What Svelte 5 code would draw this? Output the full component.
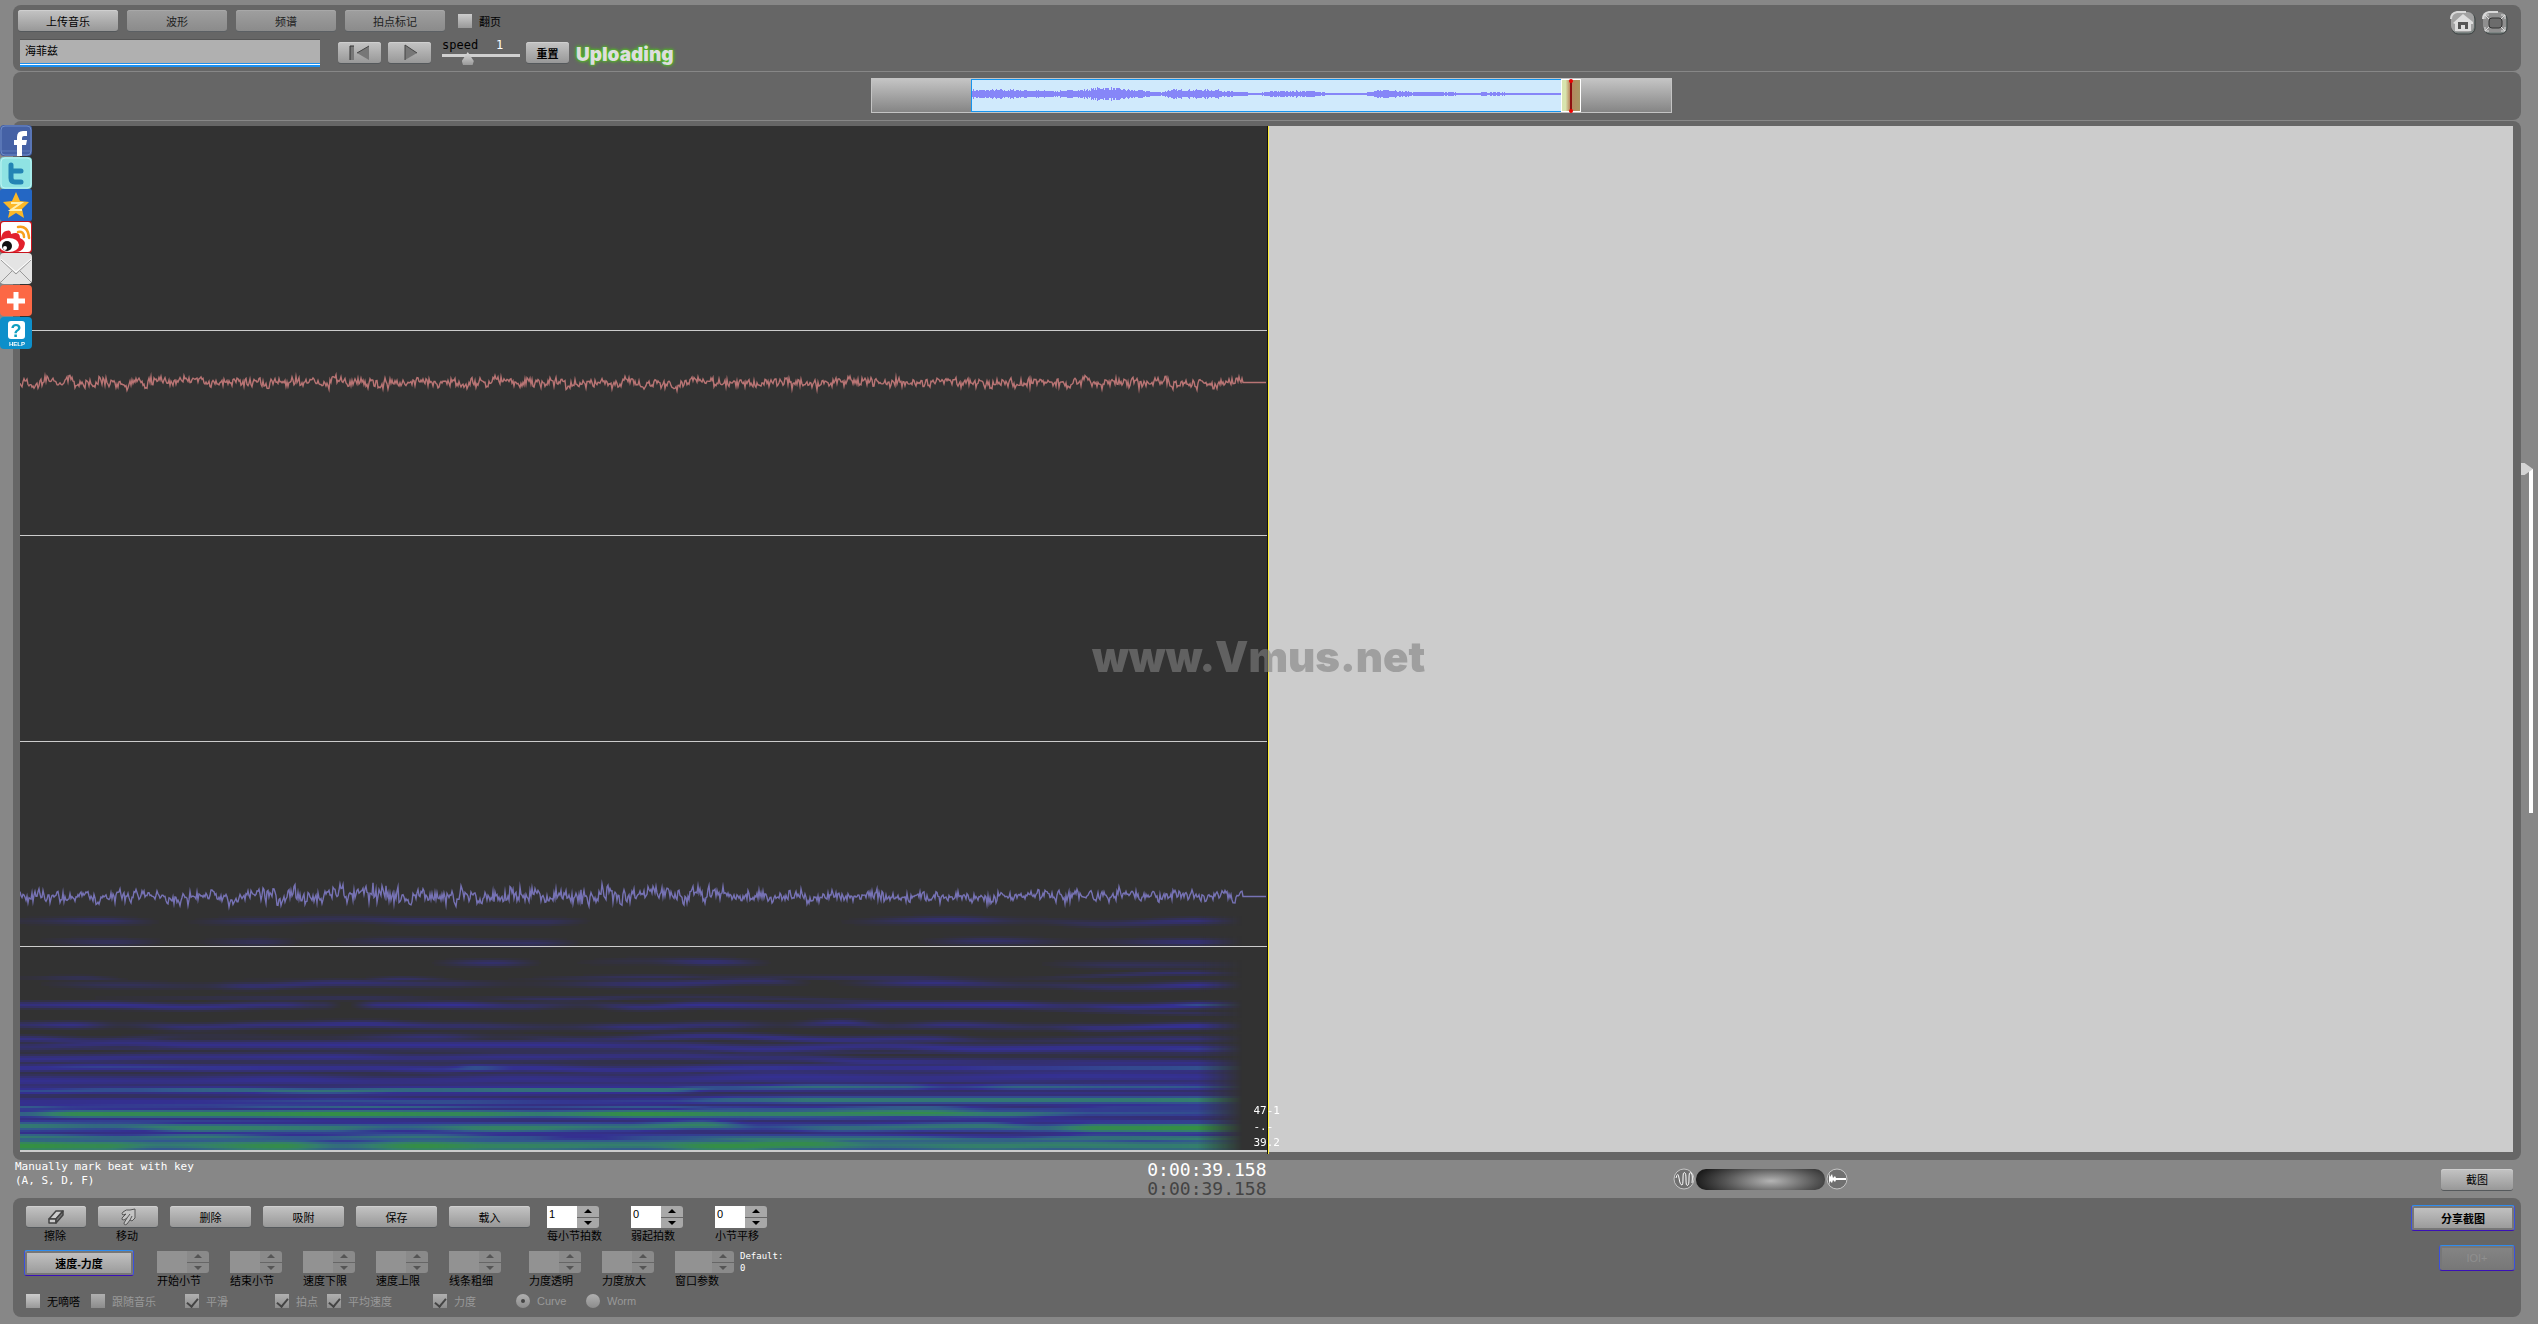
<script lang="ts">
	const navButtons = ['上传音乐', '波形', '频谱', '拍点标记'];
	const editButtons = ['删除', '吸附', '保存', '载入'];

	const beatFields = [
		{ label: '每小节拍数', value: '1' },
		{ label: '弱起拍数', value: '0' },
		{ label: '小节平移', value: '0' },
	];
	const curveFields = ['开始小节', '结束小节', '速度下限', '速度上限', '线条粗细'];
	const powerFields = ['力度透明', '力度放大', '窗口参数'];

	// w is the half width of a band, pts are [x, y, level] with y counted up from the bottom of the plot
	type Band = { w: number; pts: [number, number, number][] };
	const bands: Band[] = [
		{ w: 3, pts: [[0, 229, .08], [80, 229, .28], [150, 228, 0], [240, 229, .22], [320, 231, .18], [400, 229, .3], [520, 228, .22], [580, 229, 0], [800, 228, 0], [930, 230, .34], [1010, 229, .1], [1080, 226, .2], [1180, 229, .36], [1246, 229, .2]] },
		{ w: 3, pts: [[0, 209, 0], [90, 208, .22], [160, 208, 0], [240, 208, .2], [290, 208, 0], [380, 209, .2], [510, 207, .24], [570, 207, 0], [880, 208, 0], [970, 209, .28], [1060, 208, .05], [1180, 208, .36], [1246, 208, .2]] },
		{ w: 3, pts: [[0, 187, 0], [400, 187, 0], [470, 187, .3], [530, 187, 0], [620, 189, .1], [690, 188, .34], [760, 187, 0], [1000, 186, 0], [1100, 185, .2], [1180, 185, .15]] },
		{ w: 2, pts: [[0, 172, .05], [60, 172, .2], [120, 170, 0], [330, 170, .05], [380, 171, .26], [450, 170, 0], [640, 173, .22], [700, 173, .1], [880, 172, .25], [980, 171, .05], [1170, 177, .3], [1240, 176, .2]] },
		{ w: 3, pts: [[0, 166, 0], [100, 165, .2], [180, 164, .1], [230, 164, .32], [320, 167, .34], [420, 166, .22], [500, 166, .05], [640, 166, .34], [740, 169, .28], [800, 167, 0], [910, 167, .4], [1010, 165, .15], [1100, 163, .28], [1190, 165, .5], [1240, 165, .35]] },
		{ w: 3, pts: [[0, 145, .38], [80, 145, .48], [170, 143, .42], [260, 145, .38], [300, 145, .2], [325, 145, 0], [360, 145, .4], [430, 145, .5], [500, 144, .28], [560, 145, .12], [620, 143, .36], [680, 145, .48], [800, 144, .3], [880, 145, .46], [980, 145, .5], [1050, 144, .3], [1110, 143, .45], [1190, 145, .62], [1240, 145, .55]] },
		{ w: 2, pts: [[0, 152, 0], [340, 152, .2], [440, 152, .05], [540, 151, .24], [640, 153, .15], [1246, 136, .2]] },
		{ w: 3, pts: [[0, 125, .28], [50, 125, .42], [100, 125, .1], [170, 123, .34], [260, 125, .38], [340, 126, .46], [430, 124, .3], [540, 123, .14], [620, 123, .38], [700, 125, .32], [760, 125, .1], [820, 127, .4], [870, 124, .18], [930, 125, .38], [1020, 123, .2], [1080, 122, .4], [1180, 124, .54], [1246, 124, .4]] },
		{ w: 3, pts: [[0, 111, .4], [80, 109, .3], [180, 114, .1], [300, 112, .1], [410, 113, .34], [480, 113, .1], [560, 110, .26], [690, 114, .42], [820, 110, .42], [900, 111, .38], [980, 109, .15], [1160, 111, .34], [1246, 111, .3]] },
		{ w: 4, pts: [[0, 103, .3], [100, 107, .4], [180, 105, .46], [400, 105, .5], [520, 105, .48], [640, 104, .4], [740, 101, .46], [860, 104, .42], [960, 101, .5], [1080, 102, .5], [1246, 101, .56]] },
		{ w: 4, pts: [[0, 91, .45], [170, 93, .42], [310, 93, .48], [400, 92, .4], [500, 93, .44], [640, 94, .4], [760, 92, .34], [860, 88, .45], [1000, 88, .34], [1100, 87, .42], [1246, 86, .5]] },
		{ w: 4, pts: [[0, 82, .5], [80, 83, .56], [200, 82, .54], [340, 82, .48], [420, 81, .52], [455, 82, .64], [500, 82, .52], [600, 80, .48], [740, 82, .54], [860, 82, .48], [1000, 82, .56], [1120, 82, .62], [1246, 82, .68]] },
		{ w: 6, pts: [[0, 69, .48], [150, 69, .44], [260, 70, .5], [380, 68, .42], [500, 71, .46], [620, 70, .42], [760, 73, .5], [900, 72, .45], [1060, 74, .52], [1246, 73, .5]] },
		{ w: 4, pts: [[0, 59, .6], [100, 60, .64], [200, 60, .72], [300, 59, .76], [400, 60, .74], [520, 60, .78], [640, 60, .78], [700, 62, .64], [800, 63, .74], [880, 63, .7], [930, 63, .55], [1000, 63, .7], [1120, 63, .66], [1246, 63, .6]] },
		{ w: 5, pts: [[0, 48, .48], [160, 48, .52], [320, 49, .6], [420, 48, .62], [560, 48, .54], [640, 49, .56], [720, 50, .72], [800, 50, .8], [900, 50, .8], [1050, 50, .8], [1246, 50, .84]] },
		{ w: 3, pts: [[0, 43, .66], [60, 43, .54], [180, 43, .54], [260, 43, .64], [350, 43, .7], [500, 43, .56], [620, 43, .64], [740, 41, .62], [900, 42, .72], [1000, 41, .5], [1100, 42, .6], [1246, 42, .6]] },
		{ w: 5, pts: [[0, 36, .7], [60, 36, .94], [200, 36, .92], [320, 36, .98], [440, 36, .92], [520, 36, .82], [620, 36, .98], [740, 36, .86], [900, 37, .92], [980, 36, .8], [1080, 37, .62], [1246, 38, .6]] },
		{ w: 6, pts: [[0, 24, .8], [90, 24, .72], [180, 22, .86], [300, 22, .8], [380, 23, .7], [480, 22, .86], [600, 23, .76], [680, 25, .84], [740, 23, .6], [820, 22, .74], [960, 24, .78], [1020, 22, .72], [1080, 22, .94], [1180, 22, .98], [1246, 22, .85]] },
		{ w: 5, pts: [[0, 13, .78], [100, 12, .72], [180, 13, .78], [280, 12, .66], [400, 13, .76], [500, 12, .64], [560, 12, .5], [640, 12, .64], [740, 11, .78], [860, 11, .78], [980, 10, .7], [1080, 12, .76], [1246, 11, .82]] },
		{ w: 8, pts: [[0, 4, .98], [80, 4, .92], [140, 5, .78], [260, 4, .94], [320, 4, .74], [400, 4, .96], [480, 4, .86], [620, 5, .8], [700, 4, .96], [780, 6, .94], [860, 5, .76], [960, 4, .82], [1040, 5, .82], [1140, 4, .8], [1246, 4, .86]] },
	];

	const stops: [number, number[]][] = [
		[0, [50, 50, 50]],
		[.5, [53, 48, 146]],
		[.64, [50, 88, 142]],
		[.8, [52, 126, 110]],
		[1, [52, 148, 58]],
	];

	function colour(v: number) {
		for (let i = 1; i < stops.length; i++) {
			const [b, cb] = stops[i];
			if (v > b && i < stops.length - 1) continue;
			const [a, ca] = stops[i - 1];
			const t = Math.min(1, (v - a) / (b - a));
			return ca.map((c, k) => c + (cb[k] - c) * t);
		}
		return stops[0][1];
	}

	function random(seed: number) {
		let s = seed;
		return () => (s = (s * 16807) % 2147483647) / 2147483647;
	}

	function sample(pts: [number, number, number][], x: number) {
		let i = 1;
		while (i < pts.length - 1 && pts[i][0] < x) i++;
		const [x0, y0, v0] = pts[i - 1];
		const [x1, y1, v1] = pts[i];
		let t = Math.max(0, Math.min(1, (x - x0) / (x1 - x0)));
		t = t * t * (3 - 2 * t);
		return [y0 + (y1 - y0) * t, v0 + (v1 - v0) * t];
	}

	function floorLevel(r: number, x: number) {
		if (r < 24) return .42 + .14 * Math.sin(r * 2.3 + x / 170);
		if (r < 36) return .26 + .16 * Math.sin(r * 2.3 + x / 170);
		if (r < 55) return .1 + .1 * Math.sin(r * 1.9 + x / 210);
		return 0;
	}

	function drawSpectrum(ctx: CanvasRenderingContext2D, width: number, height: number) {
		const rows = 122;
		const end = width - 25;
		for (let x = 0; x < end; x++) {
			const levels = new Array(rows).fill(0);
			for (const band of bands) {
				const [y, v] = sample(band.pts, (x / width) * 1246);
				for (let r = 0; r < rows; r++) {
					const d = (r * 2 + 1 - y) / band.w;
					if (Math.abs(d) < 2) levels[r] = Math.max(levels[r], v * Math.exp(-d * d * .8));
				}
			}
			const fade = Math.min(1, (end - x) / 45);
			for (let r = 0; r < rows; r++) {
				const v = Math.max(levels[r], floorLevel(r, x));
				if (v < .02) continue;
				const [cr, cg, cb] = colour(v);
				ctx.fillStyle = `rgba(${cr | 0}, ${cg | 0}, ${cb | 0}, ${fade})`;
				ctx.fillRect(x, height - (r + 1) * 2, 1, 2);
			}
		}
	}

	function drawTrace(ctx: CanvasRenderingContext2D, y: number, width: number, stroke: string, seed: number, amp: (x: number) => number) {
		const rnd = random(seed);
		let drift = 0;
		ctx.strokeStyle = stroke;
		ctx.lineWidth = 1.4;
		ctx.beginPath();
		for (let x = 0; x < width; x++) {
			drift = drift * .72 + (rnd() - .5) * 4.4;
			const a = x > width - 25 ? 0 : amp(x);
			const spike = rnd() > .94 ? 1.7 : 1;
			ctx.lineTo(x, y + a * (drift * .55 + (rnd() - .5) * 3.4 * spike));
		}
		ctx.stroke();
	}

	let canvas: HTMLCanvasElement;
	let width = $state(0);
	let height = $state(0);

	$effect(() => {
		if (!width || !height) return;
		canvas.width = width;
		canvas.height = height;
		const ctx = canvas.getContext('2d')!;
		ctx.fillStyle = '#323232';
		ctx.fillRect(0, 0, width, height);
		drawSpectrum(ctx, width, height);
		ctx.fillStyle = '#ccc';
		for (let i = 1; i < 5; i++) ctx.fillRect(0, Math.floor(((height + 3) * i) / 5) - 1, width, 1);
		drawTrace(ctx, Math.round(height / 4) + .5, width, '#b87474', 41, () => 2);
		drawTrace(ctx, Math.round(height * .75) + 2.5, width, '#7672b4', 977, (x) => (x > 240 && x < 690 ? 3.4 : 2.3));
	});

	// half heights of the overview waveform
	const envelope: [number, number, number][] = [
		[0, 0, 4], [39, 0, 4], [82, 0, 3], [109, 0, 4], [132, 0, 6], [157, 0, 4], [189, 0, 2], [200, 0, 4], [243, 0, 4],
		[264, 0, 2], [285, 0, 1], [302, 0, 3], [334, 0, 3], [360, 0, 1], [388, 0, 1], [414, 0, 4], [441, 0, 2],
		[473, 0, 2], [494, 0, 1], [521, 0, 2], [543, 0, 1], [564, 0, 1], [589, 0, 1],
	];

	function overviewPath() {
		const rnd = random(7);
		let d = '';
		for (let x = 0; x < 589; x++) {
			const a = Math.max(1, Math.round(sample(envelope, x)[1] * (.7 + rnd() * .5)));
			d += `M${x} ${14 - a}h1v${a * 2}h-1z`;
		}
		return d;
	}
</script>

{#snippet spinner(id: string, label: string, value: string, disabled: boolean, wide = false)}
	<div class="field">
		<div class="spinner" class:wide class:off={disabled}>
			<input {id} type="text" {value} {disabled} />
			<div class="steps">
				<button type="button" {disabled} aria-label="{label} +"><svg viewBox="0 0 8 4"><path d="M0 4L4 0L8 4z" /></svg></button>
				<button type="button" {disabled} aria-label="{label} -"><svg viewBox="0 0 8 4"><path d="M0 0L4 4L8 0z" /></svg></button>
			</div>
		</div>
		<label for={id}>{label}</label>
	</div>
{/snippet}

{#snippet check(label: string, checked: boolean, disabled: boolean)}
	<label class="check" class:off={disabled}>
		<input type="checkbox" {checked} {disabled} />{label}
	</label>
{/snippet}

<div class="page">
	<header class="panel top">
		<div class="controls">
			<nav class="row">
				{#each navButtons as name, i}
					<button type="button" class="btn nav" class:dim={i > 0}>{name}</button>
				{/each}
				<div class="flip">{@render check('翻页', false, false)}</div>
			</nav>
			<div class="row player">
				<input class="title" type="text" value="海菲兹" aria-label="title" />
				<button type="button" class="btn play" aria-label="back to start">
					<svg width="22" height="18" viewBox="0 0 22 18">
						<path d="M1 2h4v14h-4z" fill="#777" /><path d="M1 16v-14h4" stroke="#333" fill="none" />
						<path d="M20 2v14L8 9z" fill="#777" /><path d="M8 9L20 2" stroke="#444" fill="none" />
					</svg>
				</button>
				<button type="button" class="btn play" aria-label="play">
					<svg width="16" height="18" viewBox="0 0 16 18">
						<path d="M3 1L15 9L3 16z" fill="#777" /><path d="M3 16v-15L15 9" stroke="#444" fill="none" />
					</svg>
				</button>
				<div class="speed">
					<label for="speed">speed</label><output for="speed">1</output>
					<input id="speed" type="range" min="0" max="3" step="0.1" value="0.9" />
				</div>
				<button type="button" class="btn reset">重置</button>
				<strong class="status">Uploading</strong>
			</div>
		</div>
		<div class="tools">
			<a href="#home" aria-label="home">
				<svg width="26" height="24" viewBox="0 0 26 24">
					<rect x="2" y="2" width="23" height="21" rx="6" fill="#7d8583" stroke="#3c4242" />
					<rect x="1" y="1" width="23" height="20" rx="6" fill="#a2a2a2" />
					<path d="M1 8q0-6 6-7h9" stroke="#d8d8d8" stroke-width="2" fill="none" />
					<path d="M3 12L13 3L23 11V13H21V20H5V13z" fill="#ddd" />
					<path d="M8 18v-7h10v7h-3v-4h-4v4z" fill="#555" />
				</svg>
			</a>
			<a href="#full" aria-label="full screen">
				<svg width="26" height="24" viewBox="0 0 26 24">
					<rect x="2" y="2" width="23" height="21" rx="6" fill="#7d8583" stroke="#3c4242" />
					<rect x="1" y="1" width="23" height="20" rx="6" fill="#8f8f8f" />
					<path d="M1 8q0-6 6-7h9" stroke="#d8d8d8" stroke-width="2" fill="none" />
					<rect x="7" y="7" width="13" height="10" rx="3" fill="#6c6c6c" stroke="#333" />
					<path d="M3 8V4H7M19 4H23V8M3 16V20H7M19 20H23V16M3 4l4 4M23 4l-4 4M3 20l4-4M23 20l-4-4" stroke="#ddd" fill="none" />
				</svg>
			</a>
		</div>
	</header>

	<section class="panel overview">
		<div class="track">
			<div class="selection">
				<svg viewBox="0 0 589 30" preserveAspectRatio="none"><path d={overviewPath()} fill="#8686f8" /></svg>
			</div>
			<div class="handle">
				<svg width="20" height="34" viewBox="0 0 20 34"><path d="M10 2V32" stroke="#8c1010" stroke-width="2" /><circle cx="10" cy="2" r="2" fill="#e00" /><circle cx="10" cy="32" r="2" fill="#e00" /></svg>
			</div>
		</div>
	</section>

	<main class="stage">
		<div class="panel plot-panel">
			<div class="plot">
				<div class="played" bind:clientWidth={width} bind:clientHeight={height}>
					<canvas bind:this={canvas}></canvas>
				</div>
				<div class="cursor"></div>
				<div class="watermark">www.Vmus.net</div>
				<div class="marks"><span>47-1</span><span>-.-</span><span>39.2</span></div>
			</div>
		</div>
		<input class="zoom" type="range" min="0" max="100" value="0" aria-label="zoom" />
	</main>

	<section class="strip">
		<div class="left">
			<p class="hint">Manually mark beat with key<br />(A, S, D, F)</p>
			<div class="times"><time>0:00:39.158</time><time>0:00:39.158</time></div>
		</div>
		<div class="right">
			<div class="jog">
				<svg width="22" height="22" viewBox="0 0 22 22"><circle cx="11" cy="11" r="10" fill="#707070" stroke="#c4c4c4" /><path d="M3 10Q5 3 6 10T9 17Q10 17 10 10T12 5Q13 5 13 12T15 17Q16 17 16 10T18 5Q20 6 19 15" stroke="#fff" fill="none" /></svg>
				<span class="wheel"></span>
				<svg width="22" height="22" viewBox="0 0 22 22"><circle cx="11" cy="11" r="10" fill="#707070" stroke="#c4c4c4" /><path d="M3 5L4 9L6 6L7 10L9 8L10 10L20 10V12L10 12L9 14L7 12L6 15L4 13L3 17z" fill="#fff" /></svg>
			</div>
			<button type="button" class="btn shot">截图</button>
		</div>
	</section>

	<footer class="panel bottom">
		<div class="settings">
			<div class="line">
				<div class="edit">
					<div class="tool">
						<button type="button" class="btn" aria-label="擦除">
							<svg width="18" height="16" viewBox="0 0 18 16" fill="#ccc" stroke="#444" stroke-width="1.5" stroke-linejoin="round"><path d="M2 10L9 2H16L9 10z" /><path d="M2 10H9V14H2z" /><path d="M9 10L16 2V6L9 14z" fill="#777" /></svg>
						</button>
						<span>擦除</span>
					</div>
					<div class="tool">
						<button type="button" class="btn" aria-label="移动">
							<svg width="18" height="18" viewBox="0 0 18 18" fill="#c4c4c4" stroke="#555" stroke-linejoin="round"><path d="M4 4Q7 1 11 2L16 1V10L13 13L11 12L8 16Q5 18 5 15L8 10L5 12Q2 12 3 10L7 6L4 7Q2 6 4 4z" /><path d="M8 10L11 6M11 12L13 8" fill="none" /></svg>
						</button>
						<span>移动</span>
					</div>
					{#each editButtons as name}
						<button type="button" class="btn wide">{name}</button>
					{/each}
				</div>
				<div class="beats">
					{#each beatFields as f, i}
						{@render spinner('beat' + i, f.label, f.value, false)}
					{/each}
				</div>
			</div>
			<div class="line second">
				<button type="button" class="btn framed curve-btn">速度-力度</button>
				<div class="fields">
					{#each curveFields as label, i}
						{@render spinner('curve' + i, label, '', true)}
					{/each}
				</div>
				<div class="fields">
					{#each powerFields as label, i}
						{@render spinner('power' + i, label, '', true, i === 2)}
					{/each}
				</div>
				<p class="default">Default:<br />0</p>
			</div>
			<div class="options">
				{@render check('无嘀嗒', false, false)}
				{@render check('跟随音乐', false, true)}
				{@render check('平滑', true, true)}
				{@render check('拍点', true, true)}
				{@render check('平均速度', true, true)}
				{@render check('力度', true, true)}
				<label class="check off"><input type="radio" name="mode" checked disabled />Curve</label>
				<label class="check off"><input type="radio" name="mode" disabled />Worm</label>
			</div>
		</div>
		<div class="share">
			<button type="button" class="btn framed share-btn">分享截图</button>
			<button type="button" class="btn framed ioi" disabled>IOI+</button>
		</div>
	</footer>

	<aside class="social">
		<a href="#facebook" aria-label="Facebook">
			<svg viewBox="0 0 32 32"><rect width="32" height="31" rx="4" fill="#4561a5" /><path d="M1 26h30" stroke="#5f7ab8" /><rect x="1" y="1" width="30" height="29" rx="4" fill="none" stroke="#6f8bc6" /><path d="M17 31V20h-3v-5h3v-3q0-6 6-6h4v5h-3q-2 0-2 2v2h5l-1 5h-4v11z" fill="#fff" /></svg>
		</a>
		<a href="#twitter" aria-label="Twitter">
			<svg viewBox="0 0 32 32"><rect width="32" height="32" rx="4" fill="#8fe3e3" /><rect x="1" y="1" width="30" height="30" rx="4" fill="none" stroke="#bdf4f2" /><path d="M11 8v13q0 4 4 4h6M11 14h10" stroke="#2484b4" stroke-width="5" stroke-linecap="round" fill="none" /></svg>
		</a>
		<a href="#qzone" aria-label="Qzone">
			<svg viewBox="0 0 32 32"><rect width="32" height="32" rx="2" fill="#2467c4" /><path d="M16 3l4 9 9 1-7 7 2 9-8-5-8 5 2-9-7-7 9-1z" fill="#fcb827" /><path d="M11 14h10l-10 7h11" stroke="#fff0b0" stroke-width="2" fill="none" /></svg>
		</a>
		<a href="#weibo" aria-label="Weibo">
			<svg viewBox="0 0 32 32"><rect width="32" height="32" rx="3" fill="#c8131c" /><rect x="1" y="1" width="30" height="30" rx="3" fill="#fff" /><path d="M1 17Q2 11 6 10Q11 8 11 13Q20 10 20 17Q27 20 24 26Q22 31 15 31H1z" fill="#e2202c" /><ellipse cx="9" cy="24" rx="10" ry="7" fill="#fff" /><circle cx="7" cy="25" r="5" fill="#111" /><circle cx="5" cy="27" r="2" fill="#fff" /><path d="M18 6q10-2 11 11M18 11q6-1 6 5" stroke="#f7a01d" stroke-width="2.5" fill="none" stroke-linecap="round" /></svg>
		</a>
		<a href="#mail" aria-label="Mail">
			<svg viewBox="0 0 32 32"><rect width="32" height="31" rx="4" fill="#e4e4e4" /><path d="M1 7L16 21L31 7M1 29L12 18M31 29L20 18" stroke="#999" fill="none" /><path d="M1 6L16 19L31 6" stroke="#fff" fill="none" /></svg>
		</a>
		<a href="#more" aria-label="More">
			<svg viewBox="0 0 32 32"><rect width="32" height="31" rx="4" fill="#fc6845" /><path d="M16 7v18M7 16h18" stroke="#fff" stroke-width="5" /></svg>
		</a>
		<a href="#help" aria-label="Help">
			<svg viewBox="0 0 32 32"><rect width="32" height="32" rx="4" fill="#0d8fca" /><rect x="8" y="4" width="17" height="18" rx="3" fill="#fff" /><text x="16" y="20" text-anchor="middle" font-size="18" font-weight="700" fill="#0f9fc0">?</text><text x="17" y="29" text-anchor="middle" font-size="6" font-weight="700" fill="#fff">HELP</text></svg>
		</a>
	</aside>
</div>

<style>
	:global(body) {
		margin: 0;
		background: #878787;
	}

	.page {
		position: relative;
		display: flex;
		flex-direction: column;
		box-sizing: border-box;
		min-height: 100vh;
		padding: 5px 0 7px 13px;
		font-family: "Liberation Sans", "Noto Sans CJK SC", sans-serif;
		font-size: 11px;
		color: #000;
	}

	.page * {
		box-sizing: border-box;
	}

	svg {
		display: block;
	}

	input,
	button {
		margin: 0;
		font: inherit;
		color: inherit;
	}

	.panel {
		margin-right: 17px;
		border-radius: 8px;
		background: #666;
	}

	.btn {
		display: flex;
		align-items: center;
		justify-content: center;
		height: 21px;
		padding: 0;
		border: 0;
		border-radius: 3px;
		background: linear-gradient(#c4c4c4, #989898);
		box-shadow: inset 0 1px #cfcfcf, 0 1px #55595c;
	}

	.btn.dim {
		background: linear-gradient(#9f9f9f, #8b8b8b);
		box-shadow: inset 0 1px #a8a8a8, 0 1px #5c6064;
		color: #222;
	}

	/* top bar */

	.top {
		display: flex;
		justify-content: space-between;
		height: 66px;
		padding: 5px;
	}

	.row {
		display: flex;
		align-items: center;
		gap: 9px;
		height: 21px;
	}

	.nav {
		width: 100px;
	}

	.flip {
		margin-left: 4px;
	}

	.player {
		gap: 7px;
		height: 27px;
		margin-top: 8px;
		padding-left: 2px;
	}

	.title {
		width: 300px;
		height: 28px;
		margin-right: 11px;
		padding: 0 5px 6px;
		border: 0;
		background: linear-gradient(#555 0 1px, #b0b0b0 1px 24px, #1c90f0 24px 25px, #fff 25px 26px, #1c90f0 26px);
	}

	.play {
		width: 43px;
	}

	.speed {
		display: grid;
		grid-template-columns: 1fr 24px;
		width: 78px;
		height: 27px;
		margin: 0 -1px 0 4px;
		font-family: "DejaVu Sans Mono", monospace;
		font-size: 12px;
		line-height: 12px;
	}

	.speed output {
		color: #fff;
	}

	.speed input {
		grid-column: span 2;
		width: 78px;
		height: 14px;
		appearance: none;
		background: linear-gradient(transparent 2px, #d0d0d0 2px 5px, transparent 5px);
	}

	.speed input::-webkit-slider-thumb {
		width: 12px;
		height: 13px;
		appearance: none;
		background: linear-gradient(#ddd, #999);
		clip-path: polygon(50% 0, 100% 70%, 90% 100%, 10% 100%, 0 70%);
	}

	.reset {
		width: 43px;
		font-weight: 700;
	}

	.status {
		padding-top: 3px;
		color: #ddd;
		font-family: Inter, sans-serif;
		font-size: 19px;
		font-weight: 900;
		text-shadow: 0 0 2px #4fc01e, 0 0 3px #4fc01e, 0 0 4px #4fc01e;
	}

	.tools {
		display: flex;
		gap: 6px;
		padding: 1px 8px;
	}

	/* overview */

	.overview {
		display: flex;
		justify-content: center;
		height: 48px;
		margin-top: 1px;
		padding: 6px 0 0 8px;
	}

	.track {
		display: flex;
		width: 801px;
		height: 35px;
		padding-left: 99px;
		border: 1px solid #c4c4c4;
		background: linear-gradient(#c4c4c4, #858585);
	}

	.selection {
		width: 590px;
		height: 33px;
		border: 1px solid #1594ee;
		border-right: 0;
		background: #d0eafc;
	}

	.selection svg {
		width: 100%;
		height: 30px;
	}

	.handle {
		width: 20px;
		height: 33px;
		border: 1px solid #fff;
		background: linear-gradient(90deg, #d8e4ae 20%, #b8845c 45%, #a89864);
	}

	.handle svg {
		margin: -1px;
	}

	/* plot */

	.stage {
		display: flex;
		flex: 1;
		margin-top: 1px;
	}

	.plot-panel {
		display: flex;
		flex: 1;
		margin-right: 0;
		padding: 5px 8px 8px 7px;
	}

	.plot {
		position: relative;
		flex: 1;
		padding-bottom: 2px;
		background: #ccc;
	}

	.played {
		width: 50%;
		height: 100%;
		min-height: 600px;
		overflow: hidden;
	}

	canvas {
		display: block;
	}

	/* playback position, drawn over both halves */
	.cursor {
		position: absolute;
		top: 0;
		bottom: -2px;
		left: 50%;
		width: 2px;
		background: linear-gradient(90deg, #111 1px, #ffee38 1px);
	}

	.watermark {
		position: absolute;
		top: calc(50% - 2px);
		left: 43%;
		color: rgba(128, 128, 128, .6);
		font-family: Inter, sans-serif;
		font-size: 42px;
		font-weight: 900;
		line-height: 40px;
	}

	.marks {
		position: absolute;
		bottom: 1px;
		left: calc(50% - 13px);
		display: grid;
		color: #fff;
		font-family: "DejaVu Sans Mono", monospace;
		font-size: 11px;
		line-height: 16px;
	}

	.zoom {
		width: 12px;
		height: 350px;
		margin: 342px 5px 0 0;
		appearance: none;
		writing-mode: vertical-lr;
		background: linear-gradient(90deg, transparent 8px, #fff 8px) 0 6px no-repeat;
	}

	.zoom::-webkit-slider-thumb {
		width: 12px;
		height: 12px;
		appearance: none;
		background: #d4d4d4;
		clip-path: polygon(0 0, 30% 0, 100% 50%, 30% 100%, 0 100%);
	}

	/* strip between plot and settings */

	.strip {
		display: grid;
		grid-template-columns: 1fr 1fr;
		height: 38px;
		margin: 0 25px 0 7px;
		font-family: "DejaVu Sans Mono", monospace;
		font-size: 11px;
	}

	.left {
		display: flex;
		justify-content: space-between;
	}

	.right {
		display: flex;
		align-items: center;
		justify-content: space-between;
		padding-left: 406px;
	}

	.hint {
		margin: 0 0 0 -5px;
		color: #fff;
		line-height: 14px;
	}

	.times {
		display: grid;
		color: #fff;
		font-size: 18px;
		line-height: 19px;
	}

	.times time + time {
		color: #444;
	}

	.jog {
		display: flex;
		align-items: center;
		gap: 1px;
	}

	.wheel {
		width: 129px;
		height: 21px;
		border-radius: 10px;
		background: radial-gradient(ellipse 76px 22px at 75px 12px, #b4b4b4, #555 60%, #1c1c1c);
	}

	.shot {
		width: 72px;
		font-family: "Liberation Sans", "Noto Sans CJK SC", sans-serif;
	}

	/* settings */

	.bottom {
		display: flex;
		justify-content: space-between;
		min-height: 119px;
		padding: 7px 6px 0 11px;
	}

	.line {
		display: flex;
		height: 45px;
		padding: 1px 0 0 2px;
	}

	.edit {
		display: flex;
		align-items: flex-start;
		gap: 12px;
		width: 521px;
	}

	.tool {
		text-align: center;
		line-height: 18px;
	}

	.tool .btn {
		width: 60px;
	}

	.tool span {
		padding-right: 2px;
	}

	.wide.btn {
		width: 81px;
	}

	.beats,
	.fields {
		display: flex;
	}

	.beats .field {
		width: 84px;
	}

	.fields .field {
		width: 73px;
	}

	.fields + .fields {
		margin-left: 7px;
	}

	.fields + .fields .field:last-child {
		width: 65px;
	}

	.field {
		line-height: 17px;
		white-space: nowrap;
	}

	.spinner {
		display: flex;
		width: 52px;
		height: 22px;
	}

	.spinner.wide {
		width: 59px;
	}

	.spinner input {
		flex: 1;
		min-width: 0;
		padding: 0 2px 6px;
		border: 0;
		background: #fff;
	}

	.steps {
		display: grid;
		grid-template-rows: 1fr 1fr;
		gap: 1px;
		width: 22px;
	}

	.steps button {
		display: grid;
		place-items: center;
		padding: 0;
		border: 0;
		border-radius: 0 3px 0 0;
		background: #a8a8a8;
	}

	.steps button + button {
		border-radius: 0 0 3px 0;
	}

	.steps svg {
		width: 8px;
		height: 4px;
	}

	.off.spinner input {
		background: #929292;
	}

	.off .steps button {
		background: #8a8a8a;
		fill: #555;
	}

	.second {
		height: 43px;
		padding: 0;
	}

	.framed {
		height: 26px;
		border: 1px solid;
		border-color: #2e8cf0 #3a50e0 #3a10b8;
		box-shadow: inset 0 0 0 2px #777;
		font-weight: 700;
	}

	.curve-btn {
		width: 110px;
		margin-right: 23px;
	}

	.second .field {
		padding-top: 1px;
	}

	.default {
		margin: 0;
		color: #fff;
		font-family: "DejaVu Sans Mono", monospace;
		font-size: 9px;
		line-height: 12px;
	}

	.options {
		display: grid;
		grid-template-columns: 65px 94px 90px 52px 106px 83px 70px auto;
		padding-left: 2px;
	}

	.check {
		display: flex;
		align-items: center;
		gap: 7px;
		height: 16px;
		white-space: nowrap;
	}

	.check.off {
		color: #999;
	}

	.check input {
		display: grid;
		place-items: center;
		width: 14px;
		height: 14px;
		appearance: none;
		background: linear-gradient(#ccc, #999);
	}

	.check.off input {
		background: linear-gradient(#b0b0b0, #8c8c8c);
	}

	.check input[type='checkbox']:checked::before {
		width: 5px;
		height: 9px;
		border: solid #444;
		border-width: 0 2px 2px 0;
		transform: rotate(40deg);
		content: '';
	}

	.check input[type='radio'] {
		border-radius: 50%;
	}

	.check input[type='radio']:checked::before {
		width: 4px;
		height: 4px;
		border-radius: 50%;
		background: #444;
		content: '';
	}

	.share {
		display: flex;
		flex-direction: column;
		align-items: flex-end;
		gap: 14px;
	}

	.share-btn {
		width: 104px;
	}

	.ioi {
		width: 76px;
		background: linear-gradient(#858585, #777);
		color: #8f8f8f;
		font-weight: 400;
	}

	/* share icons over the left edge */

	.social {
		position: absolute;
		top: 125px;
		left: 0;
		display: grid;
	}

	.social svg {
		width: 32px;
		height: 32px;
	}
</style>
